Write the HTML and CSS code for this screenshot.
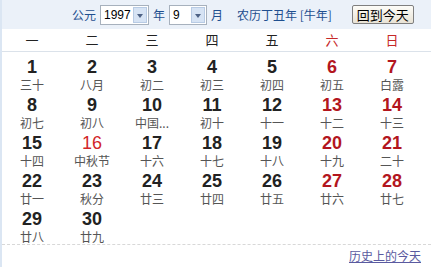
FILE: index.html
```html
<!DOCTYPE html>
<html lang="zh-CN">
<head>
  <meta charset="UTF-8">
  <title>万年历</title>
  <link rel="stylesheet" href="styles.css">
</head>
<body>
  <div class="calendar">
    <div class="toolbar">
      <span class="label">公元</span>
      <span class="select year">1997<span class="arrow"></span></span>
      <span class="label">年</span>
      <span class="select month">9<span class="arrow"></span></span>
      <span class="label">月</span>
      <span class="label lunar-year">农历丁丑年 [牛年]</span>
      <span class="today-btn">回到今天</span>
    </div>
    <div class="weekdays">
      <div>一</div><div>二</div><div>三</div><div>四</div><div>五</div>
      <div class="weekend">六</div><div class="weekend">日</div>
    </div>
    <div class="days">
      <div class="day"><b>1</b><span>三十</span></div>
      <div class="day"><b>2</b><span>八月</span></div>
      <div class="day"><b>3</b><span>初二</span></div>
      <div class="day"><b>4</b><span>初三</span></div>
      <div class="day"><b>5</b><span>初四</span></div>
      <div class="day weekend"><b>6</b><span>初五</span></div>
      <div class="day weekend"><b>7</b><span>白露</span></div>

      <div class="day"><b>8</b><span>初七</span></div>
      <div class="day"><b>9</b><span>初八</span></div>
      <div class="day"><b>10</b><span>中国...</span></div>
      <div class="day"><b>11</b><span>初十</span></div>
      <div class="day"><b>12</b><span>十一</span></div>
      <div class="day weekend"><b>13</b><span>十二</span></div>
      <div class="day weekend"><b>14</b><span>十三</span></div>

      <div class="day"><b>15</b><span>十四</span></div>
      <div class="day holiday"><b>16</b><span>中秋节</span></div>
      <div class="day"><b>17</b><span>十六</span></div>
      <div class="day"><b>18</b><span>十七</span></div>
      <div class="day"><b>19</b><span>十八</span></div>
      <div class="day weekend"><b>20</b><span>十九</span></div>
      <div class="day weekend"><b>21</b><span>二十</span></div>

      <div class="day"><b>22</b><span>廿一</span></div>
      <div class="day"><b>23</b><span>秋分</span></div>
      <div class="day"><b>24</b><span>廿三</span></div>
      <div class="day"><b>25</b><span>廿四</span></div>
      <div class="day"><b>26</b><span>廿五</span></div>
      <div class="day weekend"><b>27</b><span>廿六</span></div>
      <div class="day weekend"><b>28</b><span>廿七</span></div>

      <div class="day"><b>29</b><span>廿八</span></div>
      <div class="day"><b>30</b><span>廿九</span></div>
    </div>
    <div class="footer">
      <a href="#" class="history">历史上的今天</a>
    </div>
  </div>
</body>
</html>
```

FILE: styles.css
```css
body {
  margin: 0;
  font-family: "Noto Sans CJK SC", "Noto Sans", sans-serif;
  font-size: 12px;
  background: #fff;
}
.calendar {
  width: 431px;
  height: 267px;
  border-left: 2px solid #dbe6f3;
  box-sizing: border-box;
}
.toolbar {
  height: 29px;
  background: #ebf1f9;
  display: flex;
  align-items: center;
  padding-left: 66px;
  color: #1f4f8f;
  font-size: 12px;
}
.label {
  margin: 0 4px;
}
.lunar-year {
  margin-left: 10px;
}
.select {
  position: relative;
  display: inline-block;
  height: 18px;
  line-height: 18px;
  border: 1px solid #a7b1bd;
  background: #fff;
  color: #000;
  font-family: "Liberation Sans", sans-serif;
  font-size: 12px;
  padding-left: 3px;
  box-sizing: content-box;
}
.year {
  width: 44px;
}
.month {
  width: 33px;
}
.arrow {
  position: absolute;
  right: 1px;
  top: 1px;
  width: 14px;
  height: 16px;
  background: #d6e3f4;
  border: 1px solid #b8cbe4;
  box-sizing: border-box;
}
.arrow::after {
  content: "";
  position: absolute;
  left: 3px;
  top: 6px;
  border-left: 3px solid transparent;
  border-right: 3px solid transparent;
  border-top: 4px solid #4d6185;
}
.today-btn {
  margin-left: 16px;
  height: 17px;
  line-height: 17px;
  padding: 0 4px;
  border: 1px solid #7f7f7f;
  border-radius: 2px;
  background: linear-gradient(#fdfcf8, #e8e3d6);
  color: #000;
  font-size: 13px;
}
.weekdays {
  display: grid;
  grid-template-columns: repeat(7, 60px);
  height: 22px;
  line-height: 22px;
  border-bottom: 1px solid #dbe2ea;
  font-size: 13px;
  text-align: center;
  color: #222;
}
.weekdays .weekend {
  color: #c62828;
}
.days {
  display: grid;
  grid-template-columns: repeat(7, 60px);
  grid-auto-rows: 38px;
  height: 193px;
  border-bottom: 1px dashed #d8d8d8;
  box-sizing: border-box;
  padding-top: 5px;
}
.day {
  display: flex;
  flex-direction: column;
  align-items: center;
  color: #555;
}
.day b {
  font-family: "Liberation Sans", sans-serif;
  font-size: 18px;
  line-height: 20px;
  color: #222;
}
.day span {
  font-size: 12px;
  line-height: 16px;
}
.day.weekend b {
  color: #b3161e;
}
.day.holiday b {
  color: #d2262a;
  font-weight: normal;
}
.footer {
  text-align: right;
  padding: 2px 10px 0 0;
}
.history {
  color: #5a5aa0;
  font-size: 12px;
}
```
